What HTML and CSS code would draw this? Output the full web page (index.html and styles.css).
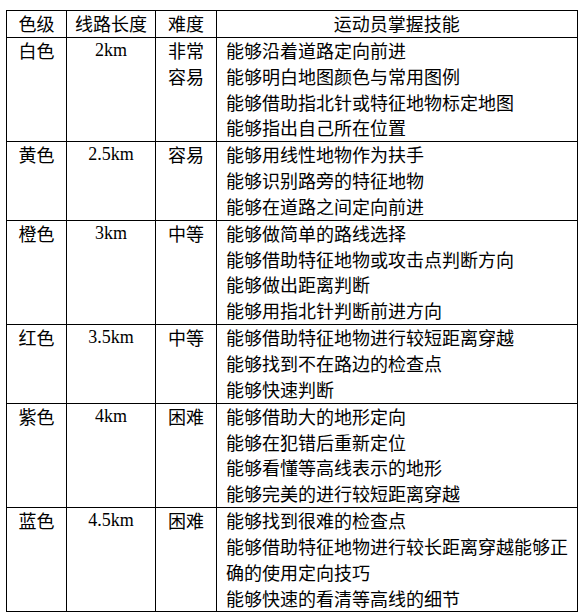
FILE: index.html
```html
<!DOCTYPE html>
<html lang="zh">
<head>
<meta charset="utf-8">
<link rel="stylesheet" href="styles.css">
</head>
<body>
<table class="grid">
  <colgroup>
    <col class="c1"><col class="c2"><col class="c3"><col class="c4">
  </colgroup>
  <thead>
    <tr><th>色级</th><th>线路长度</th><th>难度</th><th>运动员掌握技能</th></tr>
  </thead>
  <tbody>
    <tr>
      <td class="mid">白色</td><td class="mid num">2km</td><td class="mid">非常<br>容易</td>
      <td class="skills">能够沿着道路定向前进<br>能够明白地图颜色与常用图例<br>能够借助指北针或特征地物标定地图<br>能够指出自己所在位置</td>
    </tr>
    <tr>
      <td class="mid">黄色</td><td class="mid num">2.5km</td><td class="mid">容易</td>
      <td class="skills">能够用线性地物作为扶手<br>能够识别路旁的特征地物<br>能够在道路之间定向前进</td>
    </tr>
    <tr>
      <td class="mid">橙色</td><td class="mid num">3km</td><td class="mid">中等</td>
      <td class="skills">能够做简单的路线选择<br>能够借助特征地物或攻击点判断方向<br>能够做出距离判断<br>能够用指北针判断前进方向</td>
    </tr>
    <tr>
      <td class="mid">红色</td><td class="mid num">3.5km</td><td class="mid">中等</td>
      <td class="skills">能够借助特征地物进行较短距离穿越<br>能够找到不在路边的检查点<br>能够快速判断</td>
    </tr>
    <tr>
      <td class="mid">紫色</td><td class="mid num">4km</td><td class="mid">困难</td>
      <td class="skills">能够借助大的地形定向<br>能够在犯错后重新定位<br>能够看懂等高线表示的地形<br>能够完美的进行较短距离穿越</td>
    </tr>
    <tr>
      <td class="mid">蓝色</td><td class="mid num">4.5km</td><td class="mid">困难</td>
      <td class="skills">能够找到很难的检查点<br>能够借助特征地物进行较长距离穿越能够正确的使用定向技巧<br>能够快速的看清等高线的细节</td>
    </tr>
  </tbody>
</table>
</body>
</html>
```
FILE: styles.css
```css
html, body {
  margin: 0;
  padding: 0;
  background: #ffffff;
}
body {
  padding: 10px 0 0 6px;
  font-family: "Noto Sans CJK SC", "Noto Sans", sans-serif;
  font-size: 18px;
  color: #000000;
}
.grid {
  border-collapse: collapse;
  table-layout: fixed;
  width: 571px;
}
.c1 { width: 60px; }
.c2 { width: 89px; }
.c3 { width: 61px; }
.c4 { width: 361px; }
.grid th, .grid td {
  border: 1px solid #000000;
  padding: 0;
  line-height: 25.85px;
  vertical-align: top;
}
.grid th {
  font-weight: normal;
  text-align: center;
}
.grid td.mid {
  text-align: center;
}
.grid td.num {
  font-family: "Liberation Serif", "Times New Roman", serif;
  font-size: 18px;
}
.grid td.skills {
  text-align: left;
  padding-left: 9px;
}
.grid tr > *:last-child {
  border-right-width: 2px;
}
```
